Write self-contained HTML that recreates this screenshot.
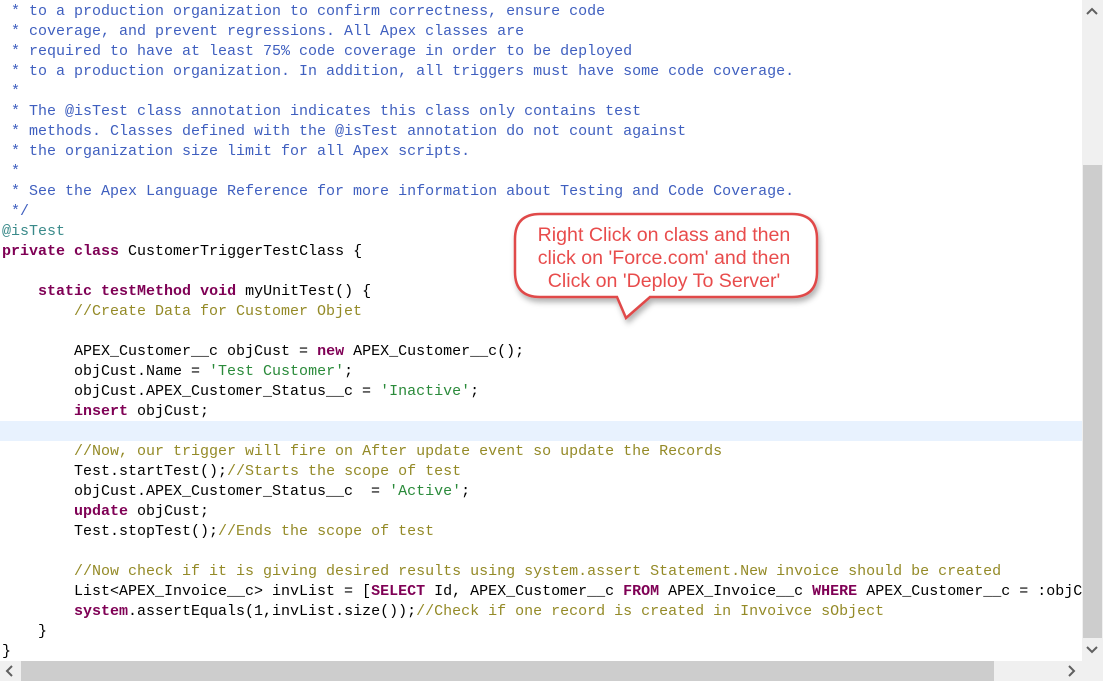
<!DOCTYPE html>
<html><head><meta charset="utf-8"><style>
html,body{margin:0;padding:0;width:1103px;height:681px;overflow:hidden;background:#fff;}
#code{position:absolute;left:2px;top:2px;margin:0;font-family:"Liberation Mono",monospace;font-size:15px;line-height:20px;color:#000;white-space:pre;}
.hl{position:absolute;left:0;top:421px;width:1082px;height:20px;background:#e8f2fe;}
.jd{color:#3f5fbf}.k{color:#7f0055;font-weight:bold}.c{color:#948a27}.s{color:#2a8a3a}.a{color:#3a8a8a}
.vs{position:absolute;left:1082px;top:0;width:21px;height:681px;background:#f0f0f0;}
.vt{position:absolute;left:1083px;top:165px;width:19px;height:473px;background:#cdcdcd;}
.hs{position:absolute;left:0;top:661px;width:1082px;height:20px;background:#f0f0f0;}
.ht{position:absolute;left:21px;top:661px;width:973px;height:20px;background:#cdcdcd;}
</style></head><body>
<div class="hl"></div>
<pre id="code"><span class="jd"> * to a production organization to confirm correctness, ensure code
 * coverage, and prevent regressions. All Apex classes are
 * required to have at least 75% code coverage in order to be deployed
 * to a production organization. In addition, all triggers must have some code coverage.
 *
 * The @isTest class annotation indicates this class only contains test
 * methods. Classes defined with the @isTest annotation do not count against
 * the organization size limit for all Apex scripts.
 *
 * See the Apex Language Reference for more information about Testing and Code Coverage.
 */</span>
<span class="a">@isTest</span>
<span class="k">private</span> <span class="k">class</span> CustomerTriggerTestClass {

    <span class="k">static</span> <span class="k">testMethod</span> <span class="k">void</span> myUnitTest() {
        <span class="c">//Create Data for Customer Objet</span>

        APEX_Customer__c objCust = <span class="k">new</span> APEX_Customer__c();
        objCust.Name = <span class="s">'Test Customer'</span>;
        objCust.APEX_Customer_Status__c = <span class="s">'Inactive'</span>;
        <span class="k">insert</span> objCust;

        <span class="c">//Now, our trigger will fire on After update event so update the Records</span>
        Test.startTest();<span class="c">//Starts the scope of test</span>
        objCust.APEX_Customer_Status__c  = <span class="s">'Active'</span>;
        <span class="k">update</span> objCust;
        Test.stopTest();<span class="c">//Ends the scope of test</span>

        <span class="c">//Now check if it is giving desired results using system.assert Statement.New invoice should be created</span>
        List&lt;APEX_Invoice__c&gt; invList = [<span class="k">SELECT</span> Id, APEX_Customer__c <span class="k">FROM</span> APEX_Invoice__c <span class="k">WHERE</span> APEX_Customer__c = :objCust.id];
        <span class="k">system</span>.assertEquals(1,invList.size());<span class="c">//Check if one record is created in Invoivce sObject</span>
    }
}</pre>
<svg style="position:absolute;left:0;top:0" width="1082" height="681">
<defs><filter id="sh" x="-20%" y="-20%" width="140%" height="160%"><feDropShadow dx="2" dy="4" stdDeviation="3" flood-color="#000" flood-opacity="0.3"/></filter></defs>
<path d="M540,214 H792 Q817,214 817,239 V272 Q817,297 792,297 H650 L626,318 L617,297 H540 Q515,297 515,272 V239 Q515,214 540,214 Z" fill="#fff" stroke="#e04848" stroke-width="2.5" filter="url(#sh)"/>
<g font-family="Liberation Sans,Arial,sans-serif" font-size="19.6" fill="#e84c4c" text-anchor="middle">
<text x="664" y="241">Right Click on class and then</text>
<text x="664" y="264">click on 'Force.com' and then</text>
<text x="664" y="287">Click on 'Deploy To Server'</text>
</g></svg>
<div class="vs"></div><div class="vt"></div>
<div class="hs"></div><div class="ht"></div>
<svg style="position:absolute;left:0;top:0" width="1103" height="681" fill="none" stroke="#606060" stroke-width="2">
<path d="M1087,14 L1092,9 L1097,14"/>
<path d="M1087,647 L1092,652 L1097,647"/>
<path d="M12,666 L7,671 L12,676"/>
<path d="M1069,666 L1074,671 L1069,676"/>
</svg>
</body></html>
